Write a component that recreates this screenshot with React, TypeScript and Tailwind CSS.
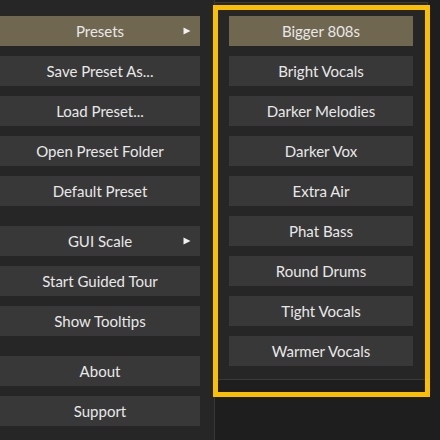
import React from "react";

const leftGroups: { label: string; arrow?: boolean; active?: boolean }[][] = [
  [
    { label: "Presets", arrow: true, active: true },
    { label: "Save Preset As..." },
    { label: "Load Preset..." },
    { label: "Open Preset Folder" },
    { label: "Default Preset" },
  ],
  [
    { label: "GUI Scale", arrow: true },
    { label: "Start Guided Tour" },
    { label: "Show Tooltips" },
  ],
  [{ label: "About" }, { label: "Support" }],
];

const presets = [
  "Bigger 808s",
  "Bright Vocals",
  "Darker Melodies",
  "Darker Vox",
  "Extra Air",
  "Phat Bass",
  "Round Drums",
  "Tight Vocals",
  "Warmer Vocals",
];

function Arrow() {
  return (
    <svg
      width="8"
      height="8"
      viewBox="0 0 8 8"
      className="absolute right-[9px] top-[11px]"
    >
      <polygon points="0.5,0.5 7.5,4 0.5,7.5" fill="#f0f0f0" />
    </svg>
  );
}

export default function App() {
  return (
    <div
      className="relative w-[440px] h-[440px] overflow-hidden flex bg-[#1e1e1e] text-[#e8e8e8] text-[15px]"
      style={{ fontFamily: "Lato, 'Noto Sans', sans-serif" }}
    >
      <div className="w-[215px] h-full bg-[#262626] border-r border-[#383838] pt-[16px] flex flex-col gap-[20px]">
        {leftGroups.map((g, gi) => (
          <div key={gi} className="flex flex-col gap-[10px]">
            {g.map((it) => (
              <div
                key={it.label}
                className={`relative w-[200px] h-[30px] flex items-center justify-center leading-none ${
                  it.active ? "bg-[#706750]" : "bg-[#383838]"
                }`}
              >
                {it.label}
                {it.arrow && <Arrow />}
              </div>
            ))}
          </div>
        ))}
      </div>
      <div className="flex-1 h-full">
        <div className="mt-[2px] w-[213px] bg-[#262626] border-t border-r border-b border-[#3a3a3a] pl-[14px] pt-[13px] pb-[13px] flex flex-col gap-[10px]">
          {presets.map((p, i) => (
            <div
              key={p}
              className={`w-[184px] h-[30px] flex items-center justify-center leading-none ${
                i === 0 ? "bg-[#706750]" : "bg-[#383838]"
              }`}
            >
              {p}
            </div>
          ))}
        </div>
      </div>
      <div className="absolute left-[213px] top-[5px] w-[217px] h-[392px] border-[5px] border-[#fcbf00] pointer-events-none" />
    </div>
  );
}
